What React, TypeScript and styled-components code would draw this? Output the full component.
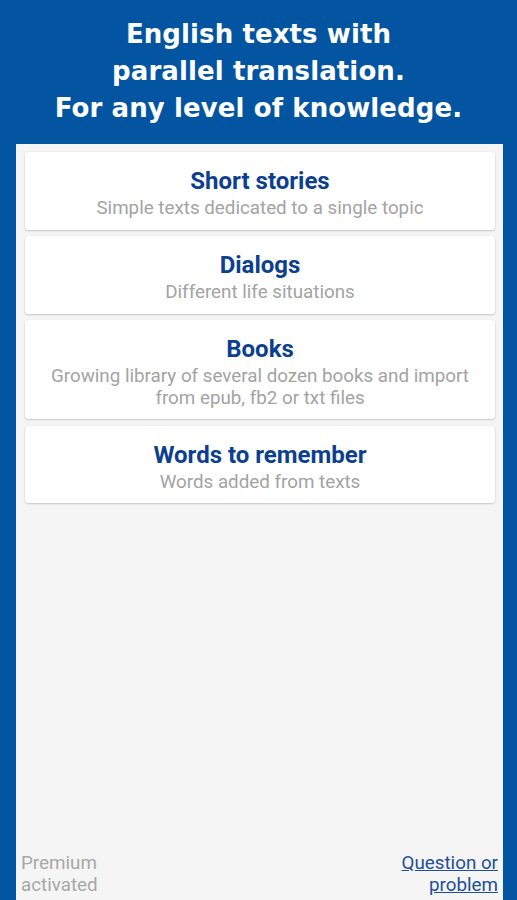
import styled, { createGlobalStyle } from 'styled-components';

const GlobalStyle = createGlobalStyle`
  html, body {
    margin: 0;
    padding: 0;
    background: #0455a1;
  }
  * {
    box-sizing: border-box;
  }
`;

const Screen = styled.div`
  width: 517px;
  height: 900px;
  background: #0455a1;
  display: flex;
  flex-direction: column;
  overflow: hidden;
`;

const Header = styled.h1`
  margin: 0;
  padding: 16px 6px 0;
  height: 144px;
  text-align: center;
  color: #ffffff;
  font-family: 'DejaVu Sans', Verdana, sans-serif;
  font-weight: 700;
  font-size: 26px;
  line-height: 37px;
  letter-spacing: 0.1px;
`;

const Panel = styled.main`
  flex: 1;
  margin: 0 14px 0 16px;
  background: #f5f5f5;
  display: flex;
  flex-direction: column;
  padding: 8px 8px 0 9px;
`;

const CardList = styled.div`
  display: flex;
  flex-direction: column;
  gap: 6.5px;
`;

const Card = styled.div`
  background: #ffffff;
  border-radius: 3px;
  box-shadow: 0 1px 2px rgba(0, 0, 0, 0.18), 0 0 1px rgba(0, 0, 0, 0.12);
  padding: 15px 10px 10px;
  text-align: center;
  font-family: Roboto, 'Liberation Sans', sans-serif;
`;

const CardTitle = styled.div`
  color: #0c3f8f;
  font-size: 24px;
  font-weight: 700;
  line-height: 28px;
`;

const CardText = styled.div`
  color: #a3a3a3;
  font-size: 18.8px;
  line-height: 21.5px;
  margin-top: 3px;
`;

const Footer = styled.footer`
  margin-top: auto;
  display: flex;
  justify-content: space-between;
  align-items: flex-end;
  padding: 0 0 4px;
  margin-left: -4px;
  margin-right: -3px;
  font-family: Roboto, 'Liberation Sans', sans-serif;
  font-size: 18.8px;
  line-height: 22px;
`;

const Status = styled.div`
  color: #a8a8a8;
`;

const HelpLink = styled.a`
  color: #1e4f9a;
  text-align: right;
  text-decoration: underline;
`;

const sections = [
  { title: 'Short stories', text: 'Simple texts dedicated to a single topic' },
  { title: 'Dialogs', text: 'Different life situations' },
  {
    title: 'Books',
    text: 'Growing library of several dozen books and import from epub, fb2 or txt files',
  },
  { title: 'Words to remember', text: 'Words added from texts' },
];

export default function App() {
  return (
    <>
      <GlobalStyle />
      <Screen>
        <Header>
          English texts with
          <br />
          parallel translation.
          <br />
          For any level of knowledge.
        </Header>
        <Panel>
          <CardList>
            {sections.map((s) => (
              <Card key={s.title}>
                <CardTitle>{s.title}</CardTitle>
                <CardText>{s.text}</CardText>
              </Card>
            ))}
          </CardList>
          <Footer>
            <Status>
              Premium
              <br />
              activated
            </Status>
            <HelpLink href="#">
              Question or
              <br />
              problem
            </HelpLink>
          </Footer>
        </Panel>
      </Screen>
    </>
  );
}
